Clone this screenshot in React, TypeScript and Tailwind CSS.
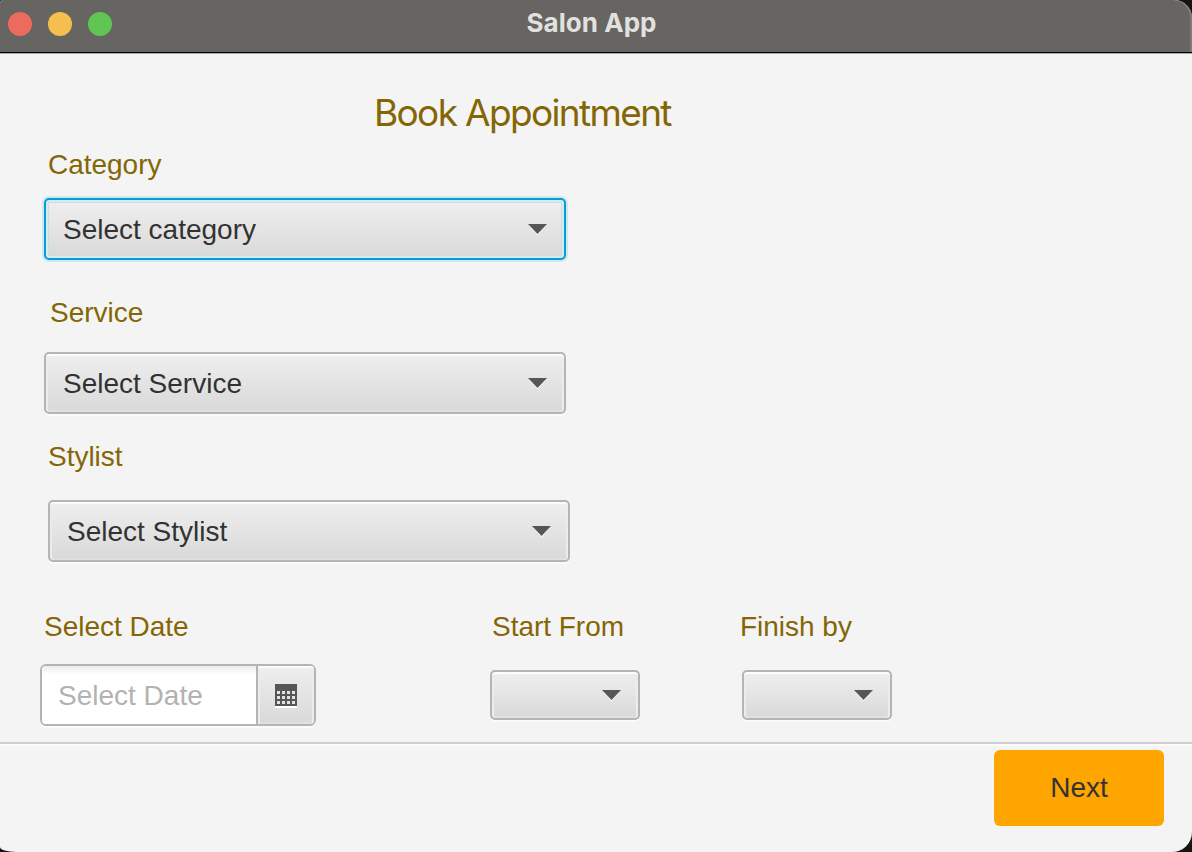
import React from "react";

const LABEL = "whitespace-nowrap text-[28px] leading-[32px] tracking-[-0.02px] text-[#846604]";

const CONTROL =
  "flex items-center justify-between rounded-[5px] border-2 border-[#b5b5b5] bg-linear-to-b from-[#efefef] to-[#d9d9d9]";

function Arrow() {
  return (
    <svg width="20" height="13" viewBox="0 0 20 13" className="shrink-0">
      <path d="M2 2.5H19L10.5 12.2Z" fill="#fff" />
      <path d="M1 1H20L10.5 11Z" fill="#565656" />
    </svg>
  );
}

function Combo({ text, focused = false }: { text: string; focused?: boolean }) {
  return (
    <button
      type="button"
      className={
        focused
          ? "flex h-[62px] w-[522px] items-center justify-between rounded-[5px] border-2 border-[#039ed3] bg-linear-to-b from-[#efefef] to-[#d9d9d9] pr-[17px] pl-[17px] shadow-[0_0_0_2px_#cfe7f0,inset_0_0_0_2px_#d8eaf1,inset_0_0_0_3px_#cbdde3]"
          : CONTROL +
            " h-[62px] w-[522px] pr-[17px] pl-[17px] shadow-[0_2px_0_#fbfbfb,inset_0_2px_0_#fcfcfc,inset_2px_0_0_#ececec,inset_-2px_0_0_#ececec,inset_0_-2px_0_#e0e0e0]"
      }
    >
      <span className="pt-px whitespace-nowrap text-[28px] leading-[32px] text-[#323232]">{text}</span>
      <Arrow />
    </button>
  );
}

function TimeCombo() {
  return (
    <button
      type="button"
      aria-label="Time"
      className={
        CONTROL +
        " h-[50px] w-[150px] pr-[17px] pl-[17px] shadow-[0_2px_0_#fbfbfb,inset_0_2px_0_#fcfcfc,inset_2px_0_0_#ececec,inset_-2px_0_0_#ececec,inset_0_-2px_0_#e0e0e0]"
      }
    >
      <span />
      <Arrow />
    </button>
  );
}

function CalendarIcon() {
  const rows = [7, 12, 17];
  const columns = [2, 7, 12, 17];
  return (
    <svg width="22" height="24" viewBox="0 0 22 24" shapeRendering="crispEdges">
      <rect y="2" width="22" height="22" fill="#fff" />
      <rect width="22" height="22" fill="#565656" />
      {rows.map((y) =>
        columns.map((x) => <rect key={`${x}-${y}`} x={x} y={y} width="3" height="3" fill="#e2e2e2" />),
      )}
    </svg>
  );
}

export default function App() {
  return (
    <div className="h-[852px] w-[1192px] overflow-hidden bg-[#171512] font-['Liberation_Sans',Arial,sans-serif]">
      <div className="flex h-full flex-col overflow-hidden rounded-tl-[3px] rounded-tr-[18px] rounded-br-[20px] [border-bottom-left-radius:16px_5px] bg-[#f4f4f4]">
        <header className="grid h-[54px] shrink-0 grid-cols-[1fr_auto_1fr] rounded-tr-[18px] border-b border-[#aaa] bg-[#666562] shadow-[inset_0_-1px_0_#000,inset_-2px_0_0_#7d7c7a]">
          <div className="flex gap-4 pt-3 pl-2">
            <span className="size-6 rounded-full bg-[#ed6a5e]" />
            <span className="size-6 rounded-full bg-[#f5bf4f]" />
            <span className="size-6 rounded-full bg-[#61c554]" />
          </div>
          <h1 className="pt-[7px] pr-[9px] font-['Inter',sans-serif] text-[26px] leading-[32px] font-bold tracking-[0.05px] text-[#e2e1df]">
            Salon App
          </h1>
        </header>

        <main className="flex h-[688px] shrink-0 flex-col items-start">
          <h2 className="mt-[37px] ml-[374px] whitespace-nowrap font-['Inter',sans-serif] text-[37px] leading-[44px] tracking-[-1.65px] text-[#846604]">
            Book Appointment
          </h2>
          <label className={LABEL + " mt-[14px] ml-[48px]"}>Category</label>
          <div className="mt-[17px] ml-[44px]">
            <Combo text="Select category" focused />
          </div>
          <label className={LABEL + " mt-[37px] ml-[50px]"}>Service</label>
          <div className="mt-[23px] ml-[44px]">
            <Combo text="Select Service" />
          </div>
          <label className={LABEL + " mt-[27px] ml-[48px]"}>Stylist</label>
          <div className="mt-[27px] ml-[48px]">
            <Combo text="Select Stylist" />
          </div>

          <div className="mt-[49px] ml-[40px] flex items-start">
            <div className="w-[450px]">
              <label className={LABEL + " ml-1 block"}>Select Date</label>
              <div className="mt-[21px] flex h-[62px] w-[276px] overflow-hidden rounded-[6px] border-2 border-[#b5b5b5] shadow-[0_2px_0_#fbfbfb]">
                <div className="flex w-[214px] items-center bg-linear-to-b from-[#ececec] to-white to-[8px] pl-4">
                  <span className="pt-px whitespace-nowrap text-[28px] leading-[32px] text-[#b2b2b2]">Select Date</span>
                </div>
                <div className="flex flex-1 items-center justify-center border-l-2 border-[#b5b5b5] bg-linear-to-b from-[#efefef] to-[#d9d9d9] pt-[2px] shadow-[inset_0_2px_0_#fcfcfc,inset_2px_0_0_#ececec,inset_-2px_0_0_#ececec,inset_0_-2px_0_#e0e0e0]">
                  <CalendarIcon />
                </div>
              </div>
            </div>
            <div className="flex w-[252px] flex-col items-start gap-[27px]">
              <label className={LABEL + " ml-[2px]"}>Start From</label>
              <TimeCombo />
            </div>
            <div className="flex flex-col items-start gap-[27px]">
              <label className={LABEL + " -ml-[2px]"}>Finish by</label>
              <TimeCombo />
            </div>
          </div>
        </main>

        <footer className="flex flex-1 items-start justify-end border-t-2 border-[#cecece] pt-[6px] pr-7 shadow-[inset_0_2px_0_#fcfcfc]">
          <button
            type="button"
            className="h-[76px] w-[170px] rounded-[6px] bg-[#ffa500] text-[28px] leading-[32px] text-[#333]"
          >
            Next
          </button>
        </footer>
      </div>
    </div>
  );
}
